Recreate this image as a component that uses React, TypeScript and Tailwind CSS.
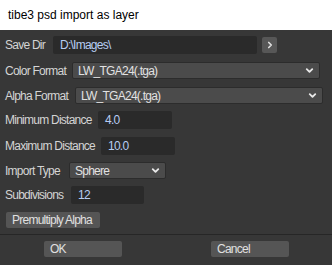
import { ChevronDown, ChevronRight } from 'lucide-react'

const FONT = { fontFamily: '"Liberation Sans", Arial, sans-serif' }
const TXT = 'whitespace-nowrap text-[12px] tracking-[-0.75px]'

function Label({ text, width }: { text: string; width: string }) {
  return <span className={`${width} ${TXT} shrink-0 text-[#d4d4d4]`}>{text}</span>
}

function TextField({ value, width }: { value: string; width: string }) {
  return (
    <div className={`${width} ${TXT} flex h-[18px] items-center rounded-[2px] bg-[#2a2a2a] pl-[7px] text-[#b7cdf3]`}>
      {value}
    </div>
  )
}

function Select({ value, width }: { value: string; width: string }) {
  return (
    <div className={`${width} ${TXT} flex h-[17px] items-center justify-between rounded-[2px] border border-[#2c2c2c] bg-[#4b4b4b] pl-[5px] pr-[4px] text-[#e2e2e2]`}>
      <span>{value}</span>
      <ChevronDown size={11} strokeWidth={4} className="text-[#e8e8e8]" />
    </div>
  )
}

function Button({ text, className }: { text: string; className: string }) {
  return (
    <button className={`${className} ${TXT} flex h-[16px] items-center rounded-[2px] bg-[#555555] pl-[6px] text-[#e0e0e0]`}>
      {text}
    </button>
  )
}

export default function App() {
  return (
    <div className="flex h-[265px] w-[332px] flex-col bg-[#373737]" style={FONT}>
      {/* Title bar */}
      <div className="flex h-[30px] shrink-0 items-center whitespace-nowrap bg-white pl-[8px] text-[12px] text-black">
        tibe3 psd import as layer
      </div>

      <div className="flex flex-col pl-[5px] pt-[6px]">
        <div className="flex h-[18px] items-center">
          <Label text="Save Dir" width="w-[48px]" />
          <TextField value="D:\Images\" width="w-[204px]" />
          <div className="ml-[5px] flex h-[16px] w-[15px] items-center justify-center rounded-[2px] bg-[#575757]">
            <ChevronRight size={10} strokeWidth={4} className="text-[#e0e0e0]" />
          </div>
        </div>

        <div className="mt-[8px] flex h-[17px] items-center">
          <Label text="Color Format" width="w-[67px]" />
          <Select value="LW_TGA24(.tga)" width="w-[248px]" />
        </div>

        <div className="mt-[8px] flex h-[17px] items-center">
          <Label text="Alpha Format" width="w-[70px]" />
          <Select value="LW_TGA24(.tga)" width="w-[248px]" />
        </div>

        <div className="mt-[7px] flex h-[18px] items-center">
          <Label text="Minimum Distance" width="w-[93px]" />
          <TextField value="4.0" width="w-[74px]" />
        </div>

        <div className="mt-[8px] flex h-[18px] items-center">
          <Label text="Maximum Distance" width="w-[96px]" />
          <TextField value="10.0" width="w-[74px]" />
        </div>

        <div className="mt-[7px] flex h-[17px] items-center">
          <Label text="Import Type" width="w-[64px]" />
          <Select value="Sphere" width="w-[97px]" />
        </div>

        <div className="mt-[7px] flex h-[18px] items-center">
          <Label text="Subdivisions" width="w-[66px]" />
          <TextField value="12" width="w-[73px]" />
        </div>

        <div className="mt-[8px] flex">
          <Button text="Premultiply Alpha" className="ml-[1px] w-[94px]" />
        </div>
      </div>

      {/* Footer */}
      <div className="mt-[6px] flex flex-1 border-t border-[#262626] pt-[6px]">
        <Button text="OK" className="ml-[44px] w-[78px]" />
        <Button text="Cancel" className="ml-[89px] w-[78px]" />
      </div>
    </div>
  )
}
